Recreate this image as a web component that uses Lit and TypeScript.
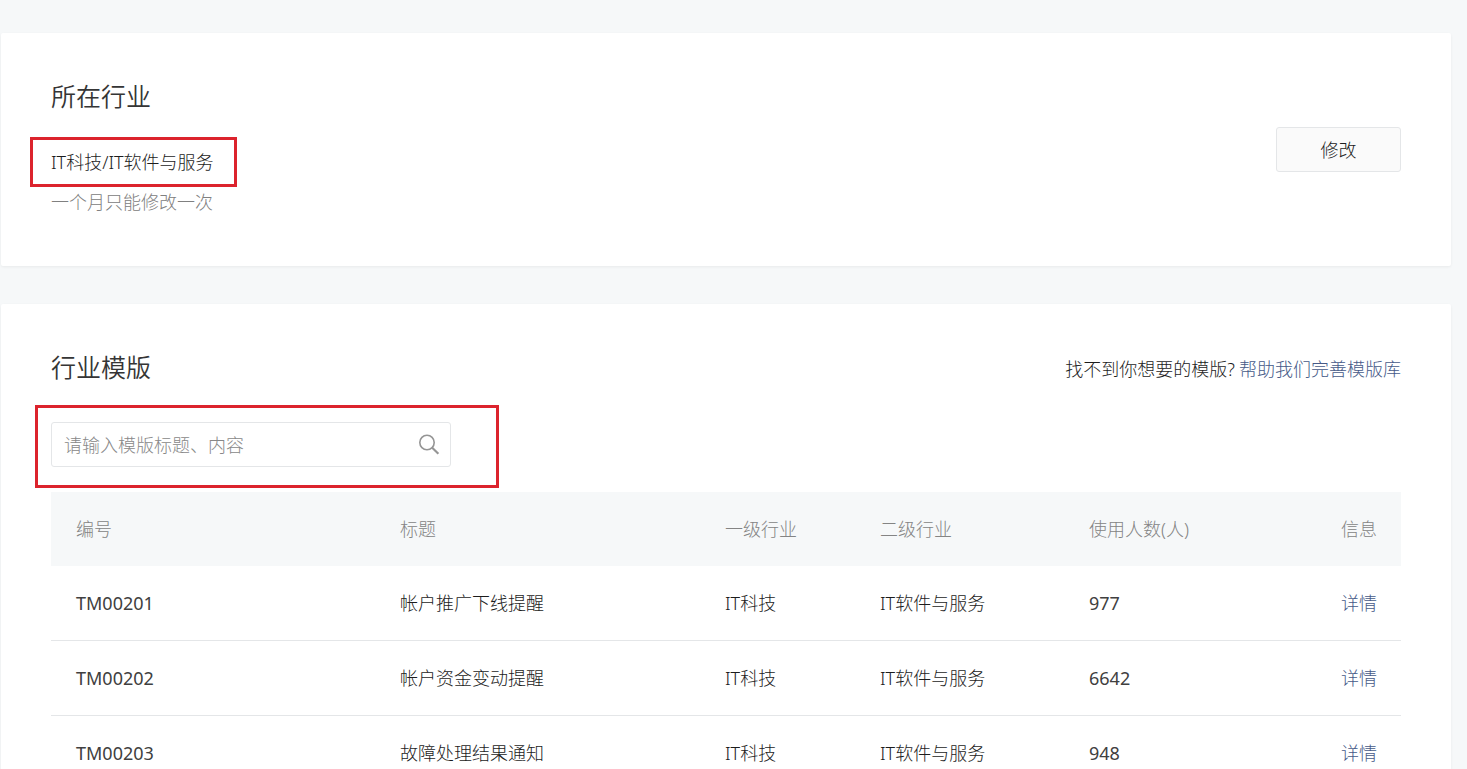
import { LitElement, html, css } from "lit";
import { customElement, state } from "lit/decorators.js";

interface Template {
  id: string;
  title: string;
  primary: string;
  secondary: string;
  users: number;
}

const TEMPLATES: Template[] = [
  { id: "TM00201", title: "帐户推广下线提醒", primary: "IT科技", secondary: "IT软件与服务", users: 977 },
  { id: "TM00202", title: "帐户资金变动提醒", primary: "IT科技", secondary: "IT软件与服务", users: 6642 },
  { id: "TM00203", title: "故障处理结果通知", primary: "IT科技", secondary: "IT软件与服务", users: 948 },
];

@customElement("app-root")
export class AppRoot extends LitElement {
  @state() private keyword = "";

  static styles = css`
    :host {
      display: flex;
      flex-direction: column;
      gap: 38px;
      box-sizing: border-box;
      height: 100vh;
      overflow: hidden;
      padding: 33px 16px 0 1px;
      background: #f6f8f9;
      color: #1c1c1c;
      font-family: "Noto Sans", "Noto Sans CJK SC", sans-serif;
      font-size: 18px;
      font-weight: 300;
      line-height: 30px;
    }
    .card {
      flex: none;
      padding: 46px 50px;
      background: #fff;
      border-radius: 2px;
      box-shadow: 0 1px 3px rgba(0, 0, 0, 0.06);
    }
    .industry {
      display: flex;
      align-items: center;
      justify-content: space-between;
    }
    .title {
      margin: 0;
      color: #353535;
      font-size: 25px;
      font-weight: 350;
      line-height: 34px;
    }
    .info {
      display: flex;
      flex-direction: column;
      align-items: flex-start;
      padding-bottom: 3px;
    }
    .current {
      margin: 34px 0 10px;
    }
    .hint {
      margin: 0;
      color: #808080;
    }
    .marked {
      position: relative;
    }
    .marked::after {
      content: "";
      position: absolute;
      border: 3px solid #dc232d;
      pointer-events: none;
    }
    .current::after {
      inset: -10px -23px -10px -21px;
    }
    .search::after {
      inset: -18px -49px -22px -17px;
    }
    .button {
      box-sizing: border-box;
      width: 125px;
      height: 45px;
      padding: 0;
      border: 1px solid #e4e6e8;
      border-radius: 3px;
      background: #fafafa;
      color: inherit;
      font: inherit;
      cursor: pointer;
    }
    .heading {
      display: flex;
      align-items: flex-end;
      justify-content: space-between;
    }
    .help {
      margin: 0;
      display: flex;
      gap: 4px;
    }
    .link {
      color: #465a88;
      text-decoration: none;
    }
    .search {
      display: flex;
      align-items: center;
      box-sizing: border-box;
      width: 400px;
      height: 45px;
      margin: 38px 0 25px;
      padding: 0 10px 0 12px;
      border: 1px solid #e4e6e8;
      border-radius: 3px;
    }
    .field {
      flex: 1;
      min-width: 0;
      padding: 0;
      border: 0;
      outline: 0;
      background: none;
      color: inherit;
      font: inherit;
    }
    .field::placeholder {
      color: #888;
      opacity: 1;
    }
    .submit {
      display: flex;
      padding: 0;
      border: 0;
      background: none;
      color: #959595;
      cursor: pointer;
    }
    .table {
      width: 100%;
      border-collapse: separate;
      border-spacing: 0;
      table-layout: fixed;
    }
    .table th,
    .table td {
      box-sizing: border-box;
      padding: 0 0 0 25px;
      text-align: left;
      font-weight: inherit;
      white-space: nowrap;
    }
    .table th {
      height: 74px;
      background: #f6f8f9;
      color: #848484;
    }
    .table td {
      height: 75px;
      border-bottom: 1px solid #e4e6e8;
    }
    .table .number {
      color: #404040;
      font-weight: 400;
    }
    .table .last {
      padding: 0 24px 0 0;
      text-align: right;
    }
    .c-id {
      width: 24%;
    }
    .c-title {
      width: 325px;
    }
    .c-primary {
      width: 155px;
    }
    .c-secondary {
      width: 209px;
    }
  `;

  private onInput(e: Event) {
    this.keyword = (e.target as HTMLInputElement).value.trim();
  }

  render() {
    const rows = TEMPLATES.filter((t) => t.title.includes(this.keyword));
    return html`
      <section class="card industry">
        <div class="info">
          <h2 class="title">所在行业</h2>
          <div class="current marked">IT科技/IT软件与服务</div>
          <p class="hint">一个月只能修改一次</p>
        </div>
        <button class="button" type="button">修改</button>
      </section>

      <section class="card">
        <div class="heading">
          <h2 class="title">行业模版</h2>
          <p class="help">
            <span>找不到你想要的模版?</span>
            <a class="link" href="#library">帮助我们完善模版库</a>
          </p>
        </div>
        <div class="search marked" role="search">
          <input
            class="field"
            type="text"
            aria-label="搜索模版"
            placeholder="请输入模版标题、内容"
            @input=${this.onInput}
          />
          <button class="submit" type="button" aria-label="搜索">
            <svg width="22" height="22" viewBox="0 0 22 22" fill="none" stroke="currentColor">
              <circle cx="9" cy="8.5" r="7.2" stroke-width="1.6" />
              <path d="M14.2 13.7L20.4 19.8" stroke-width="2.2" />
            </svg>
          </button>
        </div>
        <table class="table">
          <colgroup>
            <col class="c-id" />
            <col class="c-title" />
            <col class="c-primary" />
            <col class="c-secondary" />
            <col />
            <col />
          </colgroup>
          <thead>
            <tr>
              <th scope="col">编号</th>
              <th scope="col">标题</th>
              <th scope="col">一级行业</th>
              <th scope="col">二级行业</th>
              <th scope="col">使用人数(人)</th>
              <th scope="col" class="last">信息</th>
            </tr>
          </thead>
          <tbody>
            ${rows.map(
              (t) => html`
                <tr>
                  <td class="number">${t.id}</td>
                  <td>${t.title}</td>
                  <td>${t.primary}</td>
                  <td>${t.secondary}</td>
                  <td class="number">${t.users}</td>
                  <td class="last"><a class="link" href="#${t.id}">详情</a></td>
                </tr>
              `
            )}
          </tbody>
        </table>
      </section>
    `;
  }
}
